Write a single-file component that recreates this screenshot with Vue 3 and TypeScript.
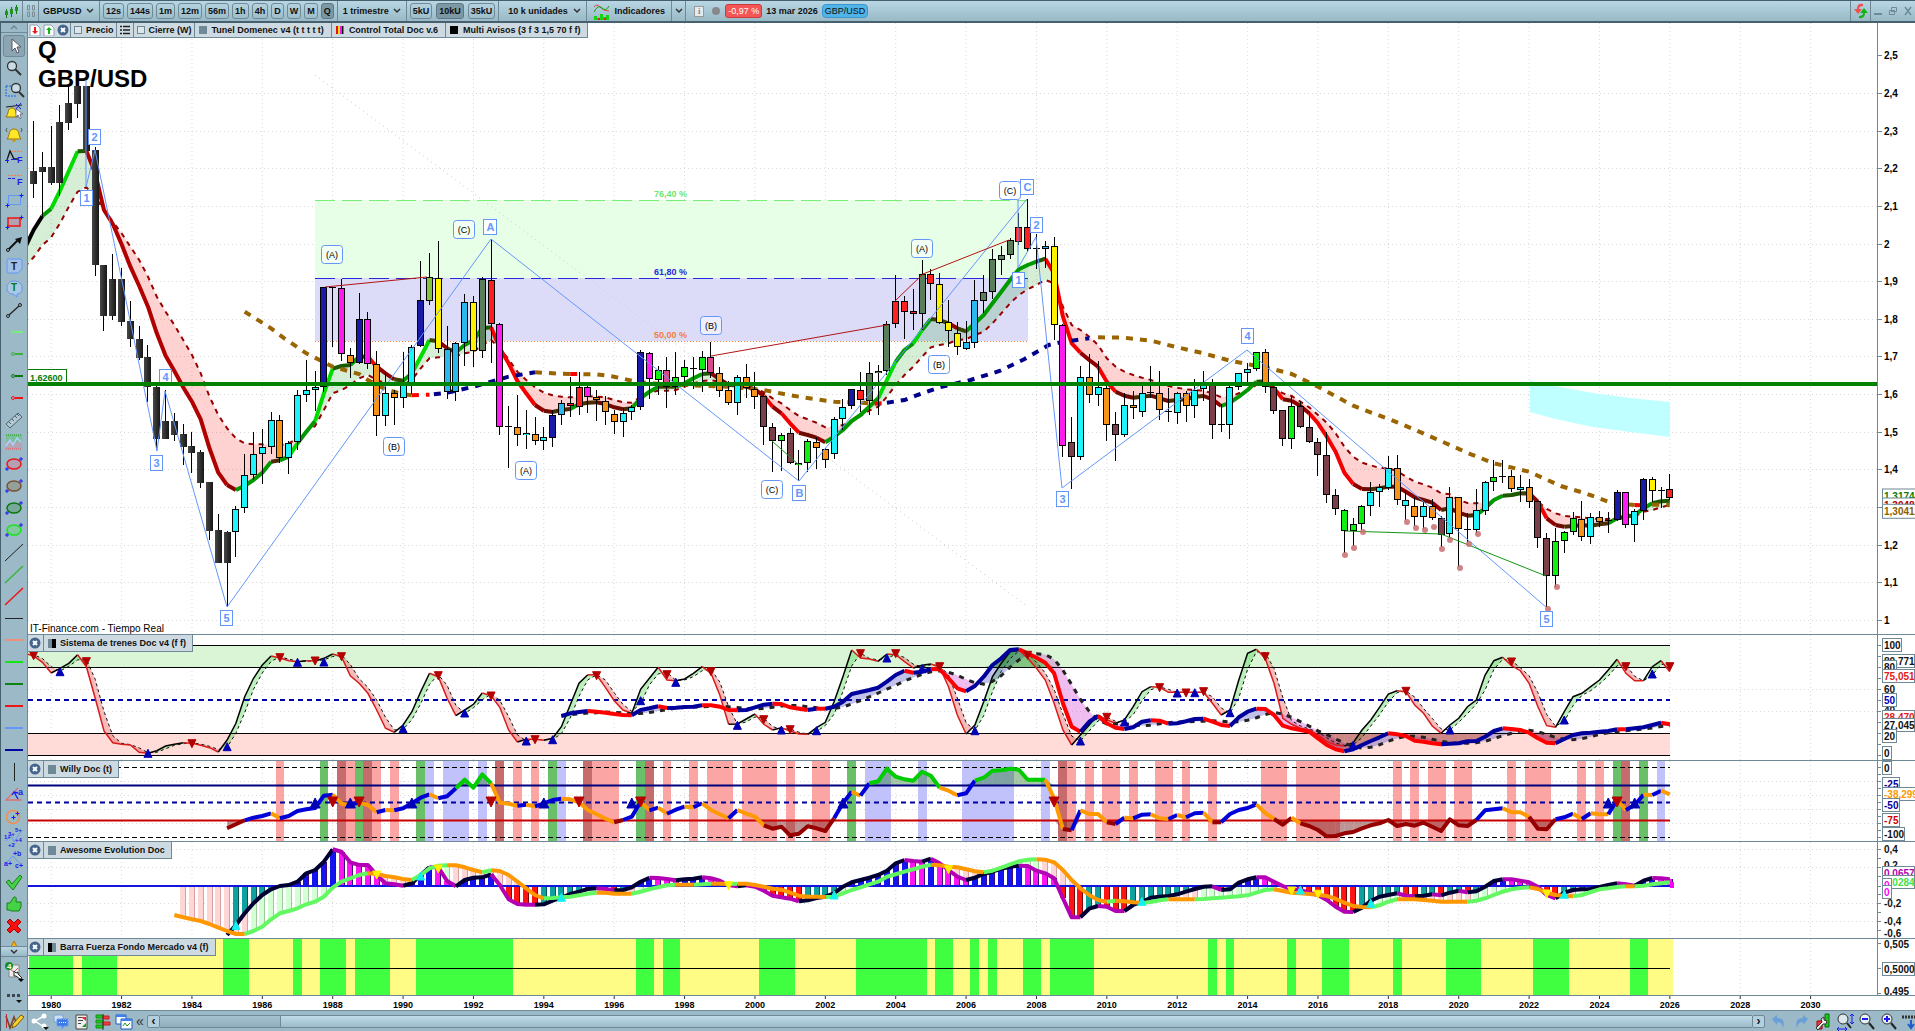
<script setup lang="ts">
type Run = { color: string; pts: string }
type Area = { color: string; pts: string }
type Tag = { t: string; v: number; c?: string; box?: boolean }

const STEP = 8.797
const X = (k: number) => 23.2 + STEP * k
// vertical data is stored in thirds of a pixel, from a base that each pane sets
const mk = (base: number) => (v: number) => Math.round(((v - base) / 3) * 10) / 10
const yMain = mk(69)
const yTrend = mk(15)
const yWilly = mk(393)
const yAwe = mk(636)
const yForce = mk(927)
const nums = (s: string) => s.trim().split(/\s+/).map(Number)

const years = Array.from({ length: 26 }, (_, i) => 1980 + i * 2)
const prices = Array.from({ length: 16 }, (_, i) => (25 - i) / 10)
const priceY = (p: number) => Math.round(597 - (p - 1) * 376.5) + 0.5
const priceText = (p: number) => String(p).replace('.', ',')

function runs(vals: number[], start: number, y: (v: number) => number, color: (i: number) => string): Run[] {
  const out: Run[] = []
  for (let i = 1; i < vals.length; i++) {
    const c = color(i)
    const p = `${X(start + i).toFixed(1)},${y(vals[i])}`
    const last = out[out.length - 1]
    if (last && last.color === c) last.pts += ' ' + p
    else out.push({ color: c, pts: `${X(start + i - 1).toFixed(1)},${y(vals[i - 1])} ${p}` })
  }
  return out
}
function between(a: number[], b: number[], start: number, y: (v: number) => number, up: string, down: string): Area[] {
  const out: Area[] = []
  const emit = (color: string, x1: number, a1: number, b1: number, x2: number, a2: number, b2: number) => {
    if (color) out.push({ color, pts: `${x1.toFixed(1)},${y(a1)} ${x2.toFixed(1)},${y(a2)} ${x2.toFixed(1)},${y(b2)} ${x1.toFixed(1)},${y(b1)}` })
  }
  for (let i = 1; i < a.length; i++) {
    const d1 = b[i - 1] - a[i - 1]
    const d2 = b[i] - a[i]
    const x1 = X(start + i - 1)
    const x2 = X(start + i)
    if (d1 * d2 < 0) {
      const f = d1 / (d1 - d2)
      const xm = x1 + (x2 - x1) * f
      const m = a[i - 1] + (a[i] - a[i - 1]) * f
      emit(d1 > 0 ? up : down, x1, a[i - 1], b[i - 1], xm, m, m)
      emit(d2 > 0 ? up : down, xm, m, m, x2, a[i], b[i])
    } else if (d1 + d2 !== 0) emit(d1 + d2 > 0 ? up : down, x1, a[i - 1], b[i - 1], x2, a[i], b[i])
  }
  return out
}
const line = (vals: number[], start: number, y: (v: number) => number) =>
  vals.map((v, i) => `${X(start + i).toFixed(1)},${y(v)}`).join(' ')

/* price candles: high, body top, body bottom, low, colour */
const candleColors: Record<string, string> = {
  K: 'url(#darkBody)', c: '#1ff4fb', o: '#f7931a', b: '#1a1aa8', m: '#ff1cf0', y: '#fff200', s: '#2cb8ec',
  g: '#5a7d5a', r: '#ff2020', l: '#10f010', w: '#7a3f48', p: '#d84a8c', v: '#84c440', d: '#000',
}
const candles = `
363 513 551 593 K|457 501 515 650 K|378 501 548 555 K|315 366 548 587 K|258 309 368 389 K|258 258 311 354 K|258 258 453 453 K|442 450 794 827 K|794 794 947 992 K|763 838 947 960 K
804 838 965 977 K|903 963 1018 1040 K|978 1017 1073 1080 K|1036 1071 1160 1205 K|1158 1160 1316 1350 K|1170 1263 1316 1316 K|1240 1263 1304 1322 K|1272 1302 1340 1394 K|1296 1338 1358 1418 K|1350 1356 1448 1463 K
1446 1446 1592 1620 K|1543 1590 1688 1688 K|1593 1596 1688 1820 K|1518 1526 1597 1670 c|1362 1426 1525 1540 c|1296 1363 1426 1440 c|1287 1342 1362 1453 c|1236 1261 1341 1362 c|1245 1261 1375 1390 o|1323 1328 1375 1423 c
1170 1186 1327 1350 c|1080 1171 1186 1207 c|1113 1162 1171 1232 c|861 862 1162 1176 b|861 862 864 1040 d|838 865 1063 1082 m|1045 1064 1090 1133 o|880 958 1090 1092 b|937 958 1093 1108 m|1053 1093 1249 1308 o
1116 1180 1249 1278 c|1170 1180 1195 1275 o|1057 1155 1195 1223 c|1035 1040 1153 1182 c|783 901 1039 1042 b|760 832 902 914 v|723 833 1048 1060 y|978 1048 1176 1196 s|1026 1030 1176 1202 s|883 907 1030 1098 s
888 907 1054 1100 y|832 838 1054 1073 g|718 841 973 1090 r|968 973 1282 1304 m|1218 1279 1282 1404 d|1185 1280 1306 1338 o|1230 1300 1306 1346 c|1252 1301 1322 1335 o|1282 1312 1324 1350 c|1230 1246 1315 1340 b
1200 1208 1246 1274 s|1130 1208 1219 1252 r|1117 1160 1222 1245 r|1150 1160 1190 1240 m|1170 1192 1201 1262 o|1188 1202 1237 1275 o|1230 1243 1267 1302 o|1225 1238 1267 1310 c|1215 1222 1237 1260 c|1050 1057 1222 1230 b
1055 1058 1138 1198 m|1098 1110 1141 1185 l|1070 1110 1160 1223 p|1055 1130 1162 1185 l|1080 1100 1130 1160 l|1072 1103 1106 1168 d|1052 1072 1110 1175 l|1027 1070 1120 1134 p|1100 1120 1172 1190 o|1144 1171 1208 1215 o
1126 1130 1208 1244 c|1093 1130 1163 1195 o|1117 1168 1190 1227 o|1180 1187 1280 1335 w|1270 1280 1324 1415 w|1298 1304 1324 1412 l|1284 1300 1390 1392 w|1350 1388 1396 1444 l|1318 1324 1390 1417 l|1310 1327 1345 1407 o
1345 1346 1381 1404 o|1252 1258 1363 1377 c|1198 1220 1258 1290 c|1167 1168 1217 1228 b|1116 1171 1201 1236 r|1086 1120 1202 1244 g|1094 1113 1120 1245 g|963 973 1114 1124 g|825 904 973 983 r|888 904 935 1017 r
867 934 943 990 r|780 823 943 990 g|808 823 853 900 r|820 853 968 972 y|900 967 994 1040 y|965 998 1042 1064 y|962 1027 1046 1050 s|840 901 1028 1043 s|826 875 902 938 g|748 778 875 897 g
738 766 779 825 g|713 721 766 776 g|640 680 725 735 r|598 680 748 757 r|703 745 748 807 d|723 739 748 803 s|712 739 976 1020 y|972 976 1337 1372 m|1251 1327 1370 1468 w|1098 1130 1370 1380 c
1062 1130 1184 1210 o|1083 1162 1184 1218 c|1158 1165 1274 1324 o|1236 1273 1304 1383 w|1180 1216 1304 1310 c|1172 1216 1225 1257 o|1147 1180 1236 1250 c|1098 1176 1180 1193 d|1112 1178 1229 1260 o|1163 1233 1235 1266 d
1175 1180 1238 1272 c|1173 1180 1218 1266 o|1138 1169 1217 1254 c|1112 1153 1168 1204 c|1138 1155 1274 1318 w|1212 1273 1276 1296 d|1154 1162 1275 1317 c|1118 1120 1162 1170 c|1090 1108 1118 1154 c|1056 1057 1108 1112 l
1047 1057 1160 1180 o|1150 1160 1232 1242 w|1230 1230 1316 1338 w|1188 1219 1316 1346 l|1203 1219 1282 1284 w|1235 1282 1325 1328 w|1314 1325 1366 1427 w|1295 1366 1486 1508 w|1468 1486 1526 1544 w|1528 1530 1594 1660 l
1555 1573 1594 1637 l|1515 1518 1573 1590 l|1446 1477 1519 1548 c|1453 1462 1477 1520 c|1368 1405 1465 1470 c|1365 1405 1499 1516 o|1470 1501 1519 1560 c|1490 1519 1550 1578 o|1505 1519 1550 1588 c|1498 1519 1555 1560 o
1548 1555 1604 1640 w|1462 1492 1603 1612 c|1490 1492 1588 1702 o|1540 1588 1591 1628 d|1467 1531 1591 1600 c|1443 1447 1532 1545 c|1381 1432 1447 1474 l|1381 1429 1432 1450 d|1409 1429 1468 1477 o|1425 1462 1469 1505 c
1437 1462 1505 1523 o|1503 1504 1615 1643 w|1600 1615 1729 1822 w|1584 1624 1729 1762 l|1594 1597 1624 1658 l|1537 1555 1597 1605 l|1503 1557 1612 1622 o|1540 1552 1612 1632 c|1534 1552 1565 1580 o|1536 1561 1564 1600 d
1470 1477 1561 1563 b|1476 1477 1576 1584 m|1528 1532 1576 1625 c|1434 1438 1532 1560 b|1431 1438 1472 1506 y|1462 1469 1471 1523 d|1422 1468 1495 1500 r`
  .trim().split(/[|\n]/).map((row, i) => {
    const f = row.trim().split(' ')
    const [h, t, b, l] = f.slice(0, 4).map(Number)
    const top = Math.round(yMain(t))
    const dark = f[4] === 'K' || f[4] === 'd'
    return {
      x: Math.floor(X(i - 2)), y1: Math.round(yMain(h)), y2: Math.round(yMain(l)), top,
      h: Math.max(1, Math.round(yMain(b)) - top), fill: candleColors[f[4]], dark,
    }
  })

/* tunnel averages */
const fast = nums(`745 690 648 626 572 513 454 453 520 630 672 733 800 858 920 1000 1067 1113 1162 1205 1258 1345 1418 1455 1470 1457 1440 1418 1385 1381 1370 1330 1295 1263 1180 1106 1098 1095 1070 1070 1100 1120 1138 1142 1120 1070 1020 1024 1045 1057 1035 1020 985 982 1045 1090 1143 1180 1215 1232 1236 1230 1227 1213 1208 1207 1212 1222 1228 1225 1195 1175 1160 1160 1160 1150 1135 1122 1120 1138 1155 1156 1160 1168 1188 1220 1240 1270 1298 1305 1313 1327 1310 1290 1263 1245 1220 1195 1140 1085 1050 1030 990 957 960 970 985 994 970 945 910 875 840 808 795 785 776 820 950 1030 1058 1080 1100 1145 1175 1187 1193 1190 1187 1195 1203 1200 1198 1190 1188 1198 1218 1208 1190 1170 1145 1144 1165 1198 1202 1218 1240 1270 1310 1355 1418 1452 1467 1468 1465 1460 1460 1475 1492 1500 1508 1530 1525 1538 1547 1545 1525 1500 1487 1485 1480 1480 1505 1555 1575 1580 1578 1576 1577 1573 1570 1555 1550 1545 1525 1510 1504 1502`)
const slow = nums(`800 772 735 712 670 620 575 562 590 630 665 700 740 780 830 890 935 975 1020 1065 1120 1190 1245 1285 1315 1330 1333 1333 1335 1336 1330 1315 1295 1278 1230 1180 1170 1155 1135 1125 1140 1150 1155 1155 1140 1105 1075 1072 1070 1068 1060 1055 1035 1020 1045 1078 1115 1140 1162 1178 1186 1190 1192 1192 1188 1190 1192 1200 1207 1208 1190 1178 1172 1172 1170 1160 1150 1143 1141 1145 1155 1158 1158 1165 1177 1195 1210 1230 1248 1258 1268 1282 1282 1275 1265 1248 1232 1220 1190 1155 1125 1100 1070 1042 1035 1030 1020 1018 1005 995 970 940 910 885 868 855 840 850 920 975 990 1010 1035 1075 1100 1115 1125 1133 1140 1150 1158 1163 1168 1170 1172 1180 1192 1190 1180 1170 1155 1150 1165 1180 1188 1205 1222 1245 1268 1300 1340 1370 1388 1396 1404 1405 1413 1430 1445 1453 1463 1480 1483 1500 1509 1510 1507 1500 1488 1487 1483 1483 1505 1527 1540 1548 1550 1552 1556 1557 1557 1550 1550 1550 1535 1530 1522 1515`)
const tunnelFill = between(fast, slow, -3, yMain, 'rgba(0,150,0,.16)', 'rgba(255,50,50,.22)')
const fastRuns = runs(fast, -3, yMain, (i) => {
  const d = fast[i] - fast[i - 1]
  if (i < 3) return '#000'
  if (d < -38) return '#00dc00'
  if (d < -9) return '#009a00'
  if (d < 0) return fast[i] < slow[i] ? '#1c5a00' : '#4a2c00'
  if (d < 14) return fast[i] < slow[i] ? '#3c4400' : '#6e0a00'
  if (d < 28) return '#8e0000'
  return i < 26 ? '#b00000' : '#f40000'
})
const longMa: Run[] = ([
  ['#9a6500', [22, 935, 25, 985, 26.5, 1015, 29, 1060, 32, 1100, 35, 1122, 36, 1140, 38, 1168, 40, 1183, 41, 1186]],
  ['#ff0000', [41, 1186, 43, 1184]],
  ['#00008b', [43.5, 1183, 45, 1178, 48, 1160, 50, 1145, 52, 1130, 55, 1117]],
  ['#9a6500', [55, 1117, 57, 1120, 59, 1122]],
  ['#ff0000', [59, 1122, 60, 1122]],
  ['#9a6500', [60.5, 1123, 62, 1123, 64, 1130, 66, 1142, 68, 1150, 72, 1155, 77, 1160, 81, 1170, 84, 1186, 87, 1198, 89, 1205, 92, 1208, 93.6, 1211]],
  ['#ff0000', [93.6, 1211, 95, 1208]],
  ['#00008b', [95, 1208, 97, 1200, 98.5, 1185, 101, 1162, 104.5, 1140, 107.8, 1113, 110.6, 1078, 113.4, 1035, 115, 1025, 116.6, 1020, 118, 1015]],
  ['#9a6500', [119, 1012, 122, 1013, 125, 1022, 128, 1042, 131, 1060, 134, 1082, 136.5, 1095, 139, 1108, 141, 1122, 144, 1160, 148, 1217, 153, 1267, 157, 1312, 161.4, 1363, 164, 1390, 168, 1415, 171.6, 1458, 174.4, 1480, 177, 1505, 178.6, 1513, 180, 1515]],
  ['#ff0000', [180, 1515, 181.6, 1516]],
  ['#9a6500', [182, 1514, 184, 1515]],
] as [string, number[]][]).map(([color, p]) => ({
  color,
  pts: p.reduce((s, v, i) => s + (i % 2 ? yMain(v) + ' ' : X(v).toFixed(1) + ','), ''),
}))

/* wave labels, in window pixels */
const waves: [string, number, number][] = [
  ['2', 94, 137], ['1', 86, 198], ['4', 165, 377], ['3', 156, 463], ['5', 226, 618], ['A', 490, 227], ['C', 1027, 187],
  ['2', 1036, 225], ['1', 1018, 280], ['B', 799, 493], ['3', 1062, 499], ['4', 1247, 336], ['5', 1546, 619],
]
const subWaves: [string, number, number][] = [
  ['(A)', 332, 254], ['(C)', 464, 229], ['(B)', 394, 446], ['(A)', 526, 470], ['(B)', 711, 325], ['(C)', 772, 489],
  ['(B)', 939, 364], ['(A)', 922, 248], ['(C)', 1010, 190],
]
const dots = [[1345, 555], [1354, 548], [1363, 532], [1407, 522], [1416, 528], [1425, 530], [1434, 527], [1442, 549], [1450, 540], [1460, 568], [1469, 544], [1478, 534], [1548, 609], [1557, 587]]

/* Sistema de trenes */
const train = nums(`70 78 97 129 115 100 74 110 205 303 338 343 345 367 370 362 348 343 338 340 346 353 366 330 280 200 145 105 78 84 92 95 92 93 85 72 80 137 160 190 240 295 307 285 245 185 130 140 205 257 240 223 189 197 232 300 336 328 328 331 325 290 225 160 134 135 172 212 240 250 178 145 112 150 152 147 130 110 130 195 283 282 267 252 283 300 293 303 312 313 293 277 215 140 60 84 87 94 72 74 95 114 106 102 112 170 255 312 285 215 140 100 65 60 85 115 150 220 300 345 315 285 255 270 280 270 230 185 170 172 187 187 187 187 187 220 255 240 150 70 58 85 160 265 283 295 300 315 335 345 348 338 300 270 232 192 182 185 225 250 288 310 285 265 230 210 135 92 82 107 122 160 230 287 292 245 200 190 170 150 120 88 130 152 152 110 92 125`)
const trainSig = train.map((v, i) => (v + train[Math.max(0, i - 1)]) / 2 + (i > 1 ? (train[i - 1] - v) * 0.1 : 0))
const trainRuns = runs(train, -3, yTrend, (i) => (train[i] < train[i - 1] ? '#000' : '#d81c1c'))
const trainFill = between(train, trainSig, -3, yTrend, 'rgba(60,210,60,.35)', 'rgba(230,60,60,.35)')
const base = nums(`258 250 246 243 245 248 252 255 256 240 235 229 234 233 231 230 226 226 230 240 241 240 232 224 221 222 232 236 240 236 236 230 215 192 186 180 173 155 135 122 128 125 117 118 145 175 184 168 140 105 85 60 58 70 83 98 130 220 290 305 275 258 280 293 297 292 275 271 272 281 280 274 267 266 275 285 288 262 245 236 237 255 287 295 300 305 325 345 358 364 358 345 333 322 310 313 318 332 335 340 343 341 340 334 333 320 303 295 297 300 308 325 338 340 327 315 310 308 305 303 298 298 295 292 285 278 283`)
const baseSig = base.map((_, i) => {
  const w = base.slice(Math.max(0, i - 4), i + 1)
  return w.reduce((a, b) => a + b, 0) / w.length
})
const baseRuns = runs(base, 58, yTrend, (i) => (base[i] < base[i - 1] ? '#00009c' : '#ff0000'))
const baseFill = between(base, baseSig, 58, yTrend, 'rgba(50,50,190,.3)', 'rgba(215,90,215,.4)')
const lowFill = between(base.map((v) => Math.max(v, 310)), base.map(() => 310), 58, yTrend, '', 'rgba(130,10,10,.4)')
const highFill = between(base.map((v) => Math.min(v, 112)), base.map(() => 112), 58, yTrend, 'rgba(0,120,0,.4)', '')
const trainDown = [[-2, 77], [4, 95], [16, 341], [26, 83], [30, 93], [33, 80], [44, 137], [50, 198], [55, 329], [62, 137], [70, 134], [75, 125], [81, 269], [84, 299], [92, 71], [96, 71], [101, 110], [111, 76], [120, 262], [126, 173], [129, 189], [131, 185], [138, 80], [154, 184], [166, 96], [179, 110], [184, 110]]
const trainUp = [[1, 125], [11, 370], [20, 350], [28, 97], [31, 96], [40, 296], [47, 249], [54, 333], [57, 329], [67, 212], [71, 157], [78, 286], [83, 300], [87, 302], [95, 84], [99, 116], [105, 302], [117, 333], [122, 276], [128, 189], [130, 188], [134, 248], [148, 346], [159, 300], [172, 270], [182, 132]]

/* Willy */
const willy = nums(`595 583 571 563 558 550 565 558 543 538 534 497 494 521 525 517 525 547 540 541 535 520 503 493 505 499 475 449 473 433 460 518 521 527 524 529 520 510 506 508 517 540 553 566 577 570 560 515 541 533 551 539 530 532 520 540 553 565 540 551 560 586 596 590 616 611 589 595 603 565 520 485 497 460 454 416 440 448 452 425 437 473 482 496 490 452 443 422 421 416 419 449 449 449 505 597 601 541 552 552 577 582 563 565 554 553 565 567 555 562 550 548 577 577 552 540 534 523 549 567 584 563 580 588 600 619 618 610 606 595 586 580 570 588 582 587 578 590 603 568 586 588 570 541 538 535 547 547 560 596 598 568 562 551 567 550 553 553 510 540 525 494 495 482 493`)
const willyRuns = runs(willy, 20, yWilly, (i) => {
  const a = willy[i - 1]
  const b = willy[i]
  if ((a + b) / 2 < 466) return '#00cc00'
  if ((a + b) / 2 > 573) return '#960000'
  return b < a ? '#0000d8' : '#ff9a00'
})
const willyHigh = between(willy.map((v) => Math.min(v, 466)), willy.map(() => 466), 20, yWilly, 'rgba(20,110,20,.38)', '')
const willyLow = between(willy.map((v) => Math.max(v, 571)), willy.map(() => 571), 20, yWilly, '', 'rgba(110,20,20,.45)')
const bandColor: Record<string, string> = { p: '#fca5a5', g: '#69c069', r: '#c66c6c', l: '#c1c1fb' }
const bands = 'p26 g31 r33 p34 g35 r36 p37 p39 g42 l43 l45-47 l49 r51 p53 p55 g57 l58 r61 p62-64 g67 r68 p70 p73 p75-77 p79-82 p84 p87-88 g91 l93-95 l99 l104-109 l113 r115 p116 p118 p120-121 p123 p126-127 p129 p132 p138-140 p142-146 p153 p155 p157-158 p160-161 p166 p168-170 p174 p176 g178 r179 g181 l183'
  .split(' ').map((s) => {
    const [a, b] = s.slice(1).split('-').map(Number)
    return { x: Math.round(X(a - 0.5)), w: Math.round(X((b ?? a) + 0.5)) - Math.round(X(a - 0.5)), c: bandColor[s[0]] }
  })
const willyUp = [30, 34, 41, 56, 66, 90, 177, 180]
const willyDown = [32, 35, 50, 60, 67, 114, 178]

/* Awesome Evolution */
const ao = nums(`915 885 850 820 795 778 768 765 755 730 720 695 658 665 697 705 705 735 760 763 767 760 735 712 712 753 769 750 743 742 733 765 808 822 824 824 823 812 803 792 785 777 775 777 781 780 772 755 743 744 747 751 748 746 742 745 752 765 769 766 770 782 797 802 806 814 811 804 800 790 770 757 750 743 735 722 700 690 693 695 686 700 720 740 750 743 732 725 716 710 707 708 722 730 745 805 862 862 836 828 830 843 843 825 815 803 800 798 793 785 777 770 769 780 778 758 748 742 742 755 768 778 780 788 795 810 830 845 846 833 812 800 795 790 797 799 797 793 796 788 782 787 784 770 753 748 748 752 757 770 795 805 788 780 778 777 771 765 760 763 767 752 744 745 748`)
const aoSlow = nums(`855 862 868 873 882 893 903 912 912 903 890 868 850 843 835 823 815 800 773 755 745 735 730 732 738 742 747 750 735 715 707 706 706 712 720 727 721 723 735 755 775 795 805 804 802 800 796 791 788 788 791 791 791 785 778 772 766 764 764 764 763 761 761 762 761 761 765 770 776 779 788 797 800 800 801 800 790 780 772 763 755 740 733 725 718 710 704 706 710 712 718 724 727 722 713 703 694 689 688 689 697 720 750 775 795 810 815 812 814 817 819 816 811 808 808 808 808 807 805 803 801 799 796 788 780 778 783 788 790 792 794 798 806 818 828 831 832 826 815 808 808 808 810 812 815 815 815 815 812 805 795 785 778 774 772 777 788 795 798 799 795 786 778 775 771 769 769 767 763 760 757`)
const aoRuns = runs(ao, 20, yAwe, (i) => (ao[i] < ao[i - 1] ? '#000033' : '#b400b4'))
const aoSlowRuns = runs(aoSlow, 14, yAwe, (i) => (aoSlow[i] < aoSlow[i - 1] ? '#62f862' : '#ff9800'))
const bar = (k: number, v: number, fill: string, edge: string) => ({
  x: Math.round(X(k)) - 3, y: Math.min(yAwe(767), yAwe(v)), h: Math.abs(yAwe(v) - yAwe(767)), fill, edge,
})
const aoBars = [
  ...aoSlow.slice(1).map((v, i) => (v < aoSlow[i] ? bar(i + 15, v, '#d4ffd4', '#a0c8a0') : bar(i + 15, v, '#ffd6d6', '#d8a0a0'))),
  ...ao.slice(1).map((v, i) => {
    const rising = v < ao[i]
    const fill = v < 767 ? (rising ? '#1414f0' : '#ff14f4') : rising ? '#0fa0a0' : '#ff1414'
    return bar(i + 21, v, fill, v < 767 ? '#3c0a78' : rising ? '#055' : '#700')
  }),
]
const aoUp = [[21, 886], [42, 738], [58, 802], [89, 795], [124, 814], [142, 780], [150, 820], [172, 793]]
const aoDown = [[37, 735], [44, 717], [77, 767], [102, 719], [141, 783], [144, 793], [170, 792]]

/* Barra Fuerza Fondo */
const force = [[-2, 2], [4, 7], [20, 22], [28, 28], [31, 33], [35, 38], [42, 52], [67, 68], [70, 71], [81, 84], [92, 99], [101, 102], [105, 105], [107, 107], [111, 112], [114, 118], [132, 132], [134, 134], [141, 141], [145, 147], [153, 153], [159, 162], [169, 172], [180, 181]]
  .map(([a, b]) => ({ x: Math.round(X(a - 0.5)), w: Math.round(X(b + 0.5)) - Math.round(X(a - 0.5)) }))
const endX = Math.round(X(184))

const tri = (x: number, y: number, r: number, up: boolean) =>
  up ? `${x - r},${y + r} ${x + r},${y + r} ${x},${y - r}` : `${x - r},${y - r} ${x + r},${y - r} ${x},${y + r}`

/* axis tags */
const tagWidth = (t: string) => [...t].reduce((a, c) => a + (c === ',' || c === '-' ? 3 : 5), 0) + 4
const priceTags: Tag[] = [
  { t: '1,31744', v: 1488, c: '#087a08', box: true }, { t: '1,30484', v: 1515, c: '#b00000', box: true }, { t: '1,30412', v: 1534, c: '#8a6000', box: true },
]
const trendTags: Tag[] = [
  { t: '100', v: 46, box: true }, { t: '80,771', v: 92, box: true }, { t: '80', v: 112, box: true }, { t: '75,051', v: 139, c: '#e02020', box: true },
  { t: '60', v: 178 }, { t: '40', v: 240 }, { t: '50', v: 211, c: '#0000b4', box: true }, { t: '28,470', v: 262, c: '#e02020', box: true },
  { t: '27,045', v: 286, box: true }, { t: '20', v: 318, box: true }, { t: '0', v: 370, box: true },
]
const willyTags: Tag[] = [
  { t: '0', v: 413, box: true }, { t: '-25', v: 461, c: '#0000a0', box: true }, { t: '-38,299', v: 493, c: '#ff9800', box: true },
  { t: '-50', v: 524, c: '#0000a0', box: true }, { t: '-75', v: 571, c: '#d00000', box: true }, { t: '-100', v: 613, box: true },
]
const aweTags: Tag[] = [
  { t: '0,4', v: 656 }, { t: '0,2', v: 706 }, { t: '0,0657', v: 728, c: '#b400b4', box: true }, { t: '0,0284', v: 757, c: '#46e046', box: true },
  { t: '0', v: 766, c: '#ff00ff', box: true }, { t: '0', v: 785, c: '#ff00ff', box: true }, { t: '-0,2', v: 819 }, { t: '-0,4', v: 873 }, { t: '-0,6', v: 908 },
]
const forceTags: Tag[] = [{ t: '0,505', v: 941 }, { t: '0,5000', v: 1016, box: true }, { t: '0,495', v: 1082 }]
const axes = [
  { tags: trendTags, y: yTrend }, { tags: willyTags, y: yWilly }, { tags: aweTags, y: yAwe }, { tags: forceTags, y: yForce },
]
const ticks = [
  [46, 79, 112, 145, 178, 211, 244, 277, 310, 343, 376], [412, 433, 454, 475, 496, 517, 538, 559, 580, 601, 622],
  [658, 685, 712, 739, 767, 793, 820, 847, 874, 901], [940, 1015, 1090],
]

/* toolbar */
const frames = ['12s', '144s', '1m', '12m', '56m', '1h', '4h', 'D', 'W', 'M', 'Q']
const unitSizes = ['5kU', '10kU', '35kU']

const plus = (x: number, y: number) => `<path d="M${x - 2} ${y}h4M${x} ${y - 2}v4" stroke="#1a1af0" fill="none"/>`
const pin = (c: string) => `<circle cx="10" cy="11" r="1.5" fill="none" stroke="${c}"/><path d="M12 11h8" stroke="${c}" stroke-width="2"/>`
const oval = (c: string, f: string) => `<ellipse cx="11" cy="11" rx="7" ry="5" fill="${f}" stroke="${c}" stroke-width="1.5"/>${plus(4, 16)}${plus(18, 6)}`
const diag = (c: string, w: number) => `<path d="M2 20L20 3" stroke="${c}" stroke-width="${w}"/>`
const flat = (c: string, w: number) => `<path d="M2 ${w === 1 ? 11.5 : 11}h18" stroke="${c}" stroke-width="${w}"/>`
const bell = '<path d="M4 16c3-3 1-10 7-10s4 7 7 10z" fill="#ffe628" stroke="#9a7400"/><circle cx="11" cy="17.500" r="1.500" fill="#c89600"/>'
const tools: { name: string; svg: string }[] = [
  { name: 'Cursor', svg: '<path d="M9 4v12l3-3 2 5 2-1-2-5h4z" fill="#fff" stroke="#556"/>' },
  { name: 'Zoom', svg: '<circle cx="9" cy="9" r="4.500" fill="#c8dce6" stroke="#333" stroke-width="1.300"/><path d="M12 12l6 6" stroke="#333" stroke-width="2"/>' },
  { name: 'Zoom de zona', svg: '<path d="M3 7h5M3 7v10h11" stroke="#1464e6" stroke-dasharray="2 1" fill="none"/><circle cx="13" cy="9" r="4.500" fill="#c8dce6" stroke="#333" stroke-width="1.300"/><path d="M16 13l5 5" stroke="#333" stroke-width="2"/>' },
  { name: 'Alerta en objeto', svg: '<path d="M3 16c3-3 1-9 6-9s3 6 6 9z" fill="#ffe628" stroke="#9a7400"/><path d="M3 6l16-2" stroke="#222"/><path d="M13 3l5 5M18 2l-5 6" stroke="#1a1af0"/><path d="M13 8v8l2-2 2 4 1-1-1-4h3z" fill="#fff" stroke="#556" stroke-width=".700"/>' },
  { name: 'Alerta', svg: bell + '<path d="M4 5q-2 2 0 4M18 5q2 2 0 4" stroke="#555" fill="none"/>' },
  { name: 'Retroceso Fibonacci', svg: '<path d="M4 15l3-9 4 8h4" stroke="#111" fill="none" stroke-width="1.300"/><path d="M8 6.500h12" stroke="#f08050" stroke-dasharray="2 1"/><path d="M2 15.500h4M4.500 13v5M8 14.500h5" stroke="#1a1af0"/><text x="14" y="18" font-size="9" font-weight="700" fill="#1a1af0">F</text>' },
  { name: 'Extensión Fibonacci', svg: '<path d="M5 8.500h14" stroke="#f08050" stroke-dasharray="2 1"/><path d="M5 11.500h8" stroke="#1a1af0" stroke-dasharray="3 1"/><text x="14" y="18" font-size="9" font-weight="700" fill="#1a1af0">F</text>' },
  { name: 'Rectángulo azul', svg: '<path d="M5.500 6.500h12v9h-12z" fill="none" stroke="#6496fa"/>' + plus(4.5, 16.5) + plus(18.5, 6.5) },
  { name: 'Rectángulo rojo', svg: '<path d="M5 7h12v8H5z" fill="#b4a0b0" stroke="#f01414" stroke-width="1.500"/>' + plus(4.5, 16.5) + plus(18.5, 6.5) },
  { name: 'Flecha', svg: '<path d="M6 16l9-9" stroke="#111" stroke-width="2"/><path d="M19 4l-2 7-5-5z" fill="#111"/><circle cx="5" cy="17" r="1.500" fill="none" stroke="#111"/>' },
  { name: 'Texto', svg: '<path d="M5 4h12q2 0 2 2v8l-4 4H5q-1 0-1-2V6q0-2 1-2z" fill="#a0c0e6" stroke="#6496fa"/><text x="8" y="15" font-size="10" font-weight="700" fill="#222">T</text>' },
  { name: 'Comentario', svg: '<path d="M11 4c5 0 8 3 8 7s-2 6-5 6v3l-4-3c-4 0-6-3-6-6s2-7 7-7z" fill="#a8c8e6" stroke="#6496fa"/><text x="8" y="14" font-size="10" font-weight="700" fill="#0a7a0a">T</text>' },
  { name: 'Segmento', svg: '<path d="M6 16l10-9" stroke="#222" stroke-width="1.300"/><circle cx="5" cy="17" r="1.500" fill="none" stroke="#222"/><circle cx="17" cy="6" r="1.500" fill="none" stroke="#222"/>' },
  { name: 'Nivel verde claro', svg: pin('#78f078') }, { name: 'Nivel verde', svg: pin('#3cb43c') }, { name: 'Nivel verde oscuro', svg: pin('#0a780a') }, { name: 'Nivel rojo', svg: pin('#f01414') },
  { name: 'Regla', svg: '<path d="M3 15L15 4l4 4L7 19z" fill="#b4c8d2" stroke="#4b6270"/><path d="M6 13l2 2M9 10l2 2M12 7l2 2M14 5l2 2" stroke="#4b6270"/>' },
  { name: 'Detección de figuras', svg: '<path d="M3 4h16v7H3z" fill="#7cbf98"/><path d="M3 11h16v7H3z" fill="#b4a4b4"/><path d="M3 15l4-6 3 5 4-7 4 4" stroke="#aad4ff" fill="none" stroke-width="1.500"/><path d="M3 4h16" stroke="#0a9a0a" stroke-dasharray="1 1"/><path d="M3 18h16" stroke="#f05050" stroke-dasharray="1 1"/>' },
  { name: 'Elipse roja', svg: oval('#f01414', '#b4a0b0') }, { name: 'Elipse marrón', svg: oval('#7a5030', '#96a09a') }, { name: 'Elipse verde oscura', svg: oval('#0a780a', '#78a89a') }, { name: 'Elipse verde', svg: oval('#14e614', '#82c8a0') },
  { name: 'Recta negra', svg: diag('#222', 1) }, { name: 'Recta verde', svg: diag('#3cb43c', 1.5) }, { name: 'Recta roja', svg: diag('#f01414', 1.5) },
  { name: 'Horizontal negra', svg: flat('#222', 1) }, { name: 'Horizontal salmón', svg: flat('#f0907c', 2) }, { name: 'Horizontal verde claro', svg: flat('#14e614', 2) },
  { name: 'Horizontal verde', svg: flat('#0f820f', 2) }, { name: 'Horizontal roja', svg: flat('#f01414', 2) }, { name: 'Horizontal azul', svg: flat('#6496fa', 2) }, { name: 'Horizontal marino', svg: flat('#0505a0', 2) },
  { name: 'Vertical', svg: '<path d="M11.500 2v18" stroke="#222"/>' },
  { name: 'Ángulo', svg: '<path d="M15 5L3 17h16" stroke="#e07070" fill="none" stroke-width="1.300"/><path d="M11 9l4 7M9 12l2-3 4 1" stroke="#1a1af0" fill="none" stroke-width="1.300"/><text x="15" y="12" font-size="9" fill="#1a1af0">a</text>' },
  { name: 'Círculo', svg: '<circle cx="10" cy="12" r="6.500" fill="none" stroke="#f09050" stroke-width="1.500"/>' + plus(10.5, 12.5) + plus(14.5, 8.5) },
  { name: 'Ondas de impulso', svg: '<path d="M3 14l5-6 3 7 8-12" stroke="#6496fa" fill="none"/><g font-size="6" font-weight="700" fill="#1a1af0"><text x="1" y="12">1+</text><text x="5" y="20">+2</text><text x="5" y="9">3+</text><text x="12" y="15">+4</text><text x="12" y="5">5+</text></g>' },
  { name: 'Ondas de corrección', svg: '<path d="M4 13l6-6 8 9" stroke="#6496fa" fill="none"/><g font-size="7" font-weight="700" fill="#1a1af0"><text x="10" y="7">+b</text><text x="1" y="17">a+</text><text x="12" y="19">c+</text></g>' },
  { name: 'Visto bueno', svg: '<path d="M3 11l3-2 3 4 8-9 2 2-9 13z" fill="#46d246" stroke="#148214"/>' },
  { name: 'Pulgar arriba', svg: '<path d="M4 10h3l4-6q3-1 2 5h5q1 5-2 9H8l-1-1H4z" fill="#46d246" stroke="#148214"/>' },
  { name: 'Cruz', svg: '<path d="M4 7l3-3 4 4 4-4 3 3-4 4 4 4-3 3-4-4-4 4-3-3 4-4z" fill="#fa0f0f" stroke="#a00"/>' },
  { name: 'Aviso', svg: '<path d="M11 4l7 14H4z" fill="#ffb414" stroke="#b47800"/>' },
]
const leftIcons: { name: string; svg: string }[] = [
  { name: 'Compartir', svg: '<path d="M15 5L6 10l9 6" stroke="#fff" stroke-width="1.500" fill="none"/><circle cx="15" cy="5" r="2.500" fill="#fff"/><circle cx="5" cy="10" r="2.500" fill="#fff"/><circle cx="15" cy="15" r="2.500" fill="#fff"/><path d="M14 16h6l-3 3z" fill="#111"/>' },
  { name: 'Mensajes', svg: '<path d="M4 4h9v7H4z" fill="#cfe0f5" stroke="#7aa0d0"/><path d="M7 8h11v7h-4l-2 3v-3H7z" fill="#3c78e6" stroke="#6a9cf0"/><path d="M9 11.500h7" stroke="#fff" stroke-dasharray="1 1"/>' },
  { name: 'Informe', svg: '<path d="M5 4h11v14H5z" fill="#eee" stroke="#444"/><path d="M7 6.500h4M7 9.500h5M7 12.500h3" stroke="#444"/><path d="M10 6h5v4z" fill="#e03030"/><path d="M11 16l4-4v4z" fill="#14a014"/>' },
  { name: 'Libro de órdenes', svg: '<path d="M4 4h7v3H4zM4 9h7v3H4zM4 14h7v3H4z" fill="#19c819" stroke="#149014"/><path d="M11 5h6v3h-6zM11 11h7v3h-7z" fill="#f03c3c" stroke="#c02020"/><path d="M11 3v16" stroke="#333"/>' },
  { name: 'Ventanas', svg: '<path d="M3 4h10v9H3z" fill="#fff" stroke="#1e5ac8"/><path d="M3 4h10v2H3z" fill="#3c82f0"/><path d="M8 8h11v10H8z" fill="#fff" stroke="#1e5ac8"/><path d="M8 8h11v2H8z" fill="#3c82f0"/><path d="M10 15l2-3 2 3 3-3" stroke="#14a014" fill="none"/>' },
]
const rightIcons: { name: string; svg: string }[] = [
  { name: 'Deshacer', svg: '<path d="M4 8l5-4v3c6 0 8 4 6 10-1-5-3-6-6-6v3z" fill="#6aa0d8"/>' },
  { name: 'Rehacer', svg: '<path d="M18 8l-5-4v3c-6 0-8 4-6 10 1-5 3-6 6-6v3z" fill="#6aa0d8"/>' },
  { name: 'Ajustes de velas', svg: '<path d="M5 10v8h5v-8z" fill="#f03c3c" stroke="#900"/><path d="M13 3h4v13h-4z" fill="#19c819" stroke="#0a6e0a"/><path d="M4 17l6-6-1-3 3-2v3l3 1-1 3h-3l-5 6z" fill="#eee" stroke="#333"/>' },
  { name: 'Ajustar zoom', svg: '<circle cx="9" cy="8" r="5" fill="#dce8ee" stroke="#333"/><path d="M13 12l4 5" stroke="#222" stroke-width="2"/><path d="M18 3v10M16 5l2-2 2 2M16 11l2 2 2-2M3 18h10M5 16l-2 2 2 2M11 16l2 2-2 2" stroke="#1a1af0" fill="none"/>' },
  { name: 'Reducir', svg: '<circle cx="9" cy="8" r="5" fill="#e6f0f5" stroke="#333"/><path d="M6 8h6" stroke="#1a1af0" stroke-width="2"/><path d="M13 12l5 6" stroke="#222" stroke-width="2"/>' },
  { name: 'Ampliar', svg: '<circle cx="9" cy="8" r="5" fill="#e6f0f5" stroke="#333"/><path d="M6 8h6M9 5v6" stroke="#1a1af0" stroke-width="2"/><path d="M13 12l5 6" stroke="#222" stroke-width="2"/>' },
  { name: 'Ir al final', svg: '<path d="M2 6h20" stroke="#333" stroke-width="3" stroke-dasharray="2 1"/><path d="M11 9v7M8 13l3 4 3-4" stroke="#1e5ac8" fill="none" stroke-width="2"/>' },
]
const paneNames = [
  { id: 'trend', title: 'Sistema de trenes Doc v4 (f f)', sw: ['#6f8a96', '#000'] },
  { id: 'willy', title: 'Willy Doc (t)', sw: ['#6f8a96', '#6f8a96'] },
  { id: 'awe', title: 'Awesome Evolution Doc', sw: ['#6f8a96', '#6f8a96'] },
  { id: 'force', title: 'Barra Fuerza Fondo Mercado v4 (f)', sw: ['#000', '#6f8a96'] },
]
</script>

<template>
  <div class="app">
    <header class="topbar">
      <button class="cell logo" aria-label="Gráfico"><svg width="16" height="16"><path d="M3.500 6v9M8.500 4v10M13.500 2v9" stroke="#0a780a" /><path d="M2 8h3v4H2zM7 6h3v5H7zM12 4h3v4h-3z" fill="#1e961e" /></svg></button>
      <button class="cell link" aria-label="Vincular"><svg width="10" height="16"><path d="M1.500 7V2.500h2V7zM6.500 7V2.500h2V7zM1.500 9v4.500h2V9zM6.500 9v4.500h2V9z" fill="none" stroke="#7d8c94" /></svg></button>
      <label class="cell pick w-sym"><select aria-label="Valor"><option>GBPUSD</option></select><svg class="chev" width="8" height="6"><path d="M1 1l3 3 3-3" /></svg></label>
      <div class="cell group">
        <button v-for="f in frames" :key="f" class="tf" :class="{ on: f === 'Q' }">{{ f }}</button>
      </div>
      <label class="cell pick w-per"><select aria-label="Periodo"><option>1 trimestre</option></select><svg class="chev" width="8" height="6"><path d="M1 1l3 3 3-3" /></svg></label>
      <div class="cell group units">
        <button v-for="u in unitSizes" :key="u" class="tf" :class="{ on: u === '10kU' }">{{ u }}</button>
      </div>
      <label class="cell pick w-unit"><select aria-label="Unidades"><option>10 k unidades</option></select><svg class="chev" width="8" height="6"><path d="M1 1l3 3 3-3" /></svg></label>
      <button class="cell ind"><svg width="17" height="17"><path d="M1 4q3-4 6 0t9 4" fill="none" stroke="#f03c3c" /><path d="M1 9q4-8 8-4t7-2" fill="none" stroke="#14a014" /><path d="M1 17v-4h3v2h3v-4h3v3h3v-2h3v5z" fill="#14d214" /><path d="M5 17v-2h2v2zM11 17v-2h2v2z" fill="#e02020" /></svg>Indicadores</button>
      <button class="cell drop" aria-label="Más indicadores"><svg class="chev" width="8" height="6"><path d="M1 1l3 3 3-3" /></svg></button>
      <div class="status">
        <span class="info">i</span><span class="dot"></span><span class="chg">-0,97 %</span><span class="date">13 mar 2026</span><span class="pair">GBP/USD</span>
      </div>
      <button class="cell sync" aria-label="Sincronizar"><svg width="16" height="16"><path d="M10 1Q4 0 4 6H1l4 5 4-5H6q0-3 4-3z" fill="#f05050" /><path d="M6 15q6 1 6-5h3l-4-5-4 5h3q0 3-4 3z" fill="#14b414" /></svg></button>
      <div class="win">
        <button aria-label="Minimizar"><svg width="10" height="10"><path d="M1 8h8" stroke-width="2" /></svg></button>
        <button aria-label="Restaurar"><svg width="10" height="10"><path d="M3.500 1.500h5v4h-5zM1.500 4.500h5v4h-5z" /></svg></button>
        <button aria-label="Cerrar"><svg width="10" height="10"><path d="M2 1l6 8M8 1L2 9" stroke-width="1.500" /></svg></button>
      </div>
    </header>

    <div class="body">
      <aside class="side">
        <button class="fold" aria-label="Subir"><svg width="8" height="5"><path d="M1 4l3-3 3 3" fill="none" stroke="#6f8a96" stroke-width="1.500" /></svg></button>
        <div class="tools">
          <button v-for="(t, i) in tools" :key="t.name" :aria-label="t.name" :class="{ active: i === 0 }"><svg width="22" height="22" v-html="t.svg"></svg></button>
        </div>
        <button class="more" aria-label="Bajar"><svg class="chev" width="8" height="6"><path d="M1 1l3 3 3-3" /></svg></button>
        <button class="gear" aria-label="Configurar"><svg width="22" height="22"><path d="M6 5h10v12H6z" fill="#eee" stroke="#888" /><path d="M7 9l4 3 4-4" stroke="#e05050" fill="none" /><circle cx="6" cy="6" r="4" fill="#148c28" /><text x="4" y="9" font-size="8" font-weight="700" fill="#fff">4</text><path d="M11 11l2 2 2-1v2l4 4-2 1-4-3h-2z" fill="#fff" stroke="#222" /><path d="M15 19h6l-3 3z" fill="#000" /></svg></button>
        <button class="dotsbtn" aria-label="Opciones"><svg width="22" height="18"><path d="M4 6h3v3H4zM9 6h3v3H9zM14 6h3v3h-3z" fill="#3c4650" /><path d="M13 12h6l-3 3z" fill="#111" /></svg></button>
      </aside>

      <main class="charts">
        <section class="pane main">
          <div class="plot">
            <svg class="cv" width="100%" height="100%">
              <defs>
                <linearGradient id="darkBody"><stop offset="0" stop-color="#484848" /><stop offset="1" stop-color="#161616" /></linearGradient>
              </defs>
              <g class="grid">
                <line v-for="y in years" :key="y" :x1="X((y - 1980) * 4)" :x2="X((y - 1980) * 4)" y1="0" y2="100%" />
                <line v-for="p in prices.slice(1)" :key="p" x1="0" x2="100%" :y1="priceY(p)" :y2="priceY(p)" />
              </g>
              <g transform="translate(-28 -23)">
                <rect x="315" y="200" width="713" height="78" fill="#e7ffe7" />
                <rect x="315" y="278" width="713" height="63" fill="#dddcf8" />
                <path d="M315 75L1028 607" stroke="#c8c8c8" stroke-dasharray="1 4" />
                <path d="M315 200.500H1028" stroke="#78f078" stroke-dasharray="20 7" />
                <path d="M315 278.500H1028" stroke="#2828d8" stroke-dasharray="20 7" />
                <path d="M315 341.500H1028" stroke="#f08040" stroke-dasharray="1 2" />
                <g class="fib"><text x="654" y="197" fill="#6ee66e">76,40 %</text><text x="654" y="275" fill="#2828d8">61,80 %</text><text x="654" y="338" fill="#f08040">50,00 %</text></g>
                <path d="M1530 380L1534 382L1560 387L1593 393L1630 398L1670 402V437L1630 432L1593 427L1560 420L1544 416L1530 412z" fill="#bfffff" />
                <g class="ttl"><text x="38" y="58">Q</text><text x="38" y="87">GBP/USD</text></g>
                <text class="src" x="30" y="632">IT-Finance.com - Tiempo Real</text>
              </g>
              <polygon v-for="(a, i) in tunnelFill" :key="'t' + i" :points="a.pts" :fill="a.color" />
              <polyline :points="line(slow, -3, yMain)" fill="none" stroke="#960000" stroke-width="2" stroke-dasharray="5 5" />
              <polyline v-for="(r, i) in fastRuns" :key="'f' + i" :points="r.pts" fill="none" :stroke="r.color" stroke-width="4" stroke-linejoin="round" />
              <polyline v-for="(r, i) in longMa" :key="'l' + i" :points="r.pts" fill="none" :stroke="r.color" stroke-width="4" stroke-dasharray="7 7" />
              <g shape-rendering="crispEdges">
                <template v-for="(c, i) in candles" :key="'c' + i">
                  <rect :x="c.x" :y="c.y1" width="1" :height="c.y2 - c.y1" fill="#000" />
                  <rect v-if="c.dark" :x="c.x - 3" :y="c.top" width="7" :height="c.h" :fill="c.fill" />
                  <template v-else>
                    <rect :x="c.x - 3" :y="c.top" width="7" :height="c.h" fill="#000" />
                    <rect :x="c.x - 2" :y="c.top + 1" width="5" :height="Math.max(1, c.h - 2)" :fill="c.fill" />
                  </template>
                </template>
              </g>
              <g transform="translate(-28 -23)">
                <g fill="none" stroke="#6496fa">
                  <path d="M86 80V187L95 150L157 451L165 391L227 607L491 239L799 481L1027 199" />
                  <path d="M1018 200V268L1036 237L1062 488L1247 350L1546 607" />
                </g>
                <path d="M325 287L427 277M711 356L887 325M895 301L923 274L1009 240" fill="none" stroke="#b01414" />
                <path d="M772 441L799 465M1345 531L1441 534L1546 576" fill="none" stroke="#149614" />
                <ellipse v-for="(d, i) in dots" :key="i" :cx="d[0]" :cy="d[1]" rx="3" ry="3" fill="#c86e6e" fill-opacity=".85" />
                <g class="wave"><template v-for="(w, i) in waves" :key="i">
                  <rect :x="w[1] - (w[0] > '9' ? 7 : 6) + 0.5" :y="w[2] - 7.5" :width="w[0] > '9' ? 13 : 12" height="15" /><text :x="w[1] + 0.5" :y="w[2] + 4">{{ w[0] }}</text>
                </template></g>
                <g class="sub"><template v-for="(w, i) in subWaves" :key="i">
                  <rect :x="w[1] - 10.5" :y="w[2] - 8.5" width="21" height="18" rx="3" /><text :x="w[1]" :y="w[2] + 4">{{ w[0] }}</text>
                </template></g>
                <rect x="27.500" y="369.500" width="39" height="14" fill="#fff" stroke="#087a08" />
                <text class="lvl" x="30" y="381">1,62600</text>
              </g>
              <rect x="0" y="359" width="100%" height="4" fill="#008200" />
            </svg>
            <div class="legend">
              <span class="lg icons">
                <svg width="12" height="12"><path d="M1 1h7l3 3v8H1z" fill="#fff" stroke="#8aa0b4" /><path d="M5 3h2v4h2L6 10 3 7h2z" fill="#e61e1e" /></svg>
                <svg width="12" height="12"><path d="M1 1h7l3 3v8H1z" fill="#fff" stroke="#8aa0b4" /><path d="M5 10h2V6h2L6 3 3 6h2z" fill="#14b414" /></svg>
                <svg width="12" height="12"><circle cx="6" cy="6" r="5.500" fill="#44658c" /><path d="M4 4l4 4M8 4L4 8" stroke="#fff" stroke-width="2" /></svg>
              </span>
              <label class="lg near"><input type="checkbox" />Precio</label>
              <span class="lg list"><svg width="10" height="10"><path d="M0 1.500h2M0 5h2M0 8.500h2M3 1.500h7M3 5h7M3 8.500h7" stroke="#222" stroke-width="1.500" /></svg></span>
              <label class="lg near"><input type="checkbox" />Cierre (W)</label>
              <span class="lg wide"><i class="sq gray"></i>Tunel Domenec v4 (t t t t t)</span>
              <span class="lg wide"><i class="sq multi"></i>Control Total Doc v.6</span>
              <span class="lg wide"><i class="sq black"></i>Multi Avisos (3 f 3 1,5 70 f f)</span>
            </div>
          </div>
          <svg class="axis" width="38" height="100%">
            <g v-for="p in prices" :key="p"><path :d="`M0 ${priceY(p)}h4`" /><text x="6" :y="priceY(p) + 3">{{ priceText(p) }}</text></g>
            <g v-for="t in priceTags" :key="t.t"><rect x="4.500" :y="yMain(t.v) - 7" width="40" height="14" /><text x="6" :y="yMain(t.v) + 4" :fill="t.c">{{ t.t }}</text></g>
          </svg>
        </section>

        <section v-for="(p, n) in paneNames" :key="p.id" class="pane" :class="p.id">
          <div class="plot">
            <svg class="cv" width="100%" height="100%">
              <g class="grid">
                <line v-for="y in years" :key="y" :x1="X((y - 1980) * 4)" :x2="X((y - 1980) * 4)" y1="0" y2="100%" />
              </g>

              <template v-if="p.id === 'trend'">
                <rect x="0" :y="yTrend(46)" :width="endX" height="22" fill="#d9f5d6" />
                <rect x="0" :y="yTrend(310)" :width="endX" height="22" fill="#ffdcd8" />
                <path v-for="v in [178, 244]" :key="v" class="gl" :d="`M0 ${Math.round(yTrend(v)) + 0.5}H1849`" />
                <polygon v-for="(a, i) in trainFill" :key="'a' + i" :points="a.pts" :fill="a.color" />
                <polygon v-for="(a, i) in baseFill" :key="'b' + i" :points="a.pts" :fill="a.color" />
                <polygon v-for="(a, i) in lowFill" :key="'c' + i" :points="a.pts" :fill="a.color" />
                <polygon v-for="(a, i) in highFill" :key="'d' + i" :points="a.pts" :fill="a.color" />
                <rect v-for="v in [46, 112, 310, 376]" :key="v" x="0" :y="Math.round(yTrend(v))" :width="endX" height="1" fill="#000" />
                <path :d="`M0 65H${endX}`" stroke="#0000aa" stroke-width="2" stroke-dasharray="5 4" />
                <polyline :points="line(trainSig, -3, yTrend)" fill="none" stroke="#111" stroke-dasharray="3 3" />
                <polyline v-for="(r, i) in trainRuns" :key="'r' + i" :points="r.pts" fill="none" :stroke="r.color" stroke-width="1.500" />
                <polyline :points="line(baseSig, 58, yTrend)" fill="none" stroke="#222" stroke-width="3" stroke-dasharray="5 6" />
                <polyline v-for="(r, i) in baseRuns" :key="'s' + i" :points="r.pts" fill="none" :stroke="r.color" stroke-width="4" stroke-linejoin="round" />
                <polygon v-for="t in trainDown" :key="'x' + t[0]" :points="tri(X(t[0]), yTrend(t[1]), 4, false)" stroke="#b40000" fill="#b40000" />
                <polygon v-for="t in trainUp" :key="'y' + t[0]" :points="tri(X(t[0]), yTrend(t[1]), 4, true)" stroke="#0000b4" fill="#0000b4" />
              </template>

              <template v-else-if="p.id === 'willy'">
                <path v-for="v in [454, 496, 538, 580]" :key="v" class="gl" :d="`M0 ${Math.round(yWilly(v)) + 0.5}H1849`" />
                <rect v-for="b in bands" :key="b.x" :x="b.x" y="0" :width="b.w" height="100%" :fill="b.c" />
                <polygon v-for="(a, i) in willyHigh" :key="'a' + i" :points="a.pts" :fill="a.color" />
                <polygon v-for="(a, i) in willyLow" :key="'b' + i" :points="a.pts" :fill="a.color" />
                <path v-for="v in [412, 622]" :key="v" :d="`M0 ${Math.round(yWilly(v)) + 0.5}H${endX}`" stroke="#000" stroke-dasharray="5 3" />
                <path :d="`M0 24.500H${endX}`" stroke="#00007d" stroke-width="2" />
                <path :d="`M0 41.500H${endX}`" stroke="#0000a0" stroke-width="2" stroke-dasharray="5 4" />
                <path :d="`M0 59.500H${endX}`" stroke="#c80000" stroke-width="2" />
                <polyline v-for="(r, i) in willyRuns" :key="'r' + i" :points="r.pts" fill="none" :stroke="r.color" stroke-width="4" stroke-linejoin="round" />
                <polygon v-for="k in willyUp" :key="'u' + k" :points="tri(X(k), 42, 5, true)" stroke="#0000b4" fill="#0000b4" />
                <polygon v-for="k in willyDown" :key="'d' + k" :points="tri(X(k), 41, 5, false)" stroke="#b40000" fill="#b40000" />
              </template>

              <template v-else-if="p.id === 'awe'">
                <path v-for="v in [658, 712, 820, 874]" :key="v" class="gl" :d="`M0 ${Math.round(yAwe(v)) + 0.5}H1849`" />
                <g shape-rendering="crispEdges">
                  <template v-for="(b, i) in aoBars" :key="'b' + i"><rect :x="b.x" :y="b.y" width="6" :height="b.h" :fill="b.fill" /><rect :x="b.x + 5" :y="b.y" width="1" :height="b.h" :fill="b.edge" /></template>
                </g>
                <path :d="`M0 44H${endX}`" stroke="#1414e0" stroke-width="2" />
                <rect :x="endX" y="40" width="4" height="6" fill="#ff00ff" />
                <polyline v-for="(r, i) in aoRuns" :key="'r' + i" :points="r.pts" fill="none" :stroke="r.color" stroke-width="4" stroke-linejoin="round" />
                <polyline v-for="(r, i) in aoSlowRuns" :key="'s' + i" :points="r.pts" fill="none" :stroke="r.color" stroke-width="4" stroke-linejoin="round" />
                <polygon v-for="t in aoUp" :key="'u' + t[0]" :points="tri(X(t[0]), yAwe(t[1]), 4, true)" stroke="#14f0f0" fill="#14f0f0" />
                <polygon v-for="t in aoDown" :key="'d' + t[0]" :points="tri(X(t[0]), yAwe(t[1]), 4, false)" stroke="#fff000" fill="#fff000" />
              </template>

              <template v-else>
                <rect x="1" y="0" :width="endX + 2" height="100%" fill="#fffc85" />
                <rect v-for="f in force" :key="f.x" :x="f.x" y="0" :width="f.w" height="100%" fill="#40ff40" />
                <rect x="0" y="29" :width="endX" height="1" fill="#000" />
              </template>
            </svg>
            <div class="legend">
              <span class="lg one"><svg width="12" height="12"><circle cx="6" cy="6" r="5.500" fill="#44658c" /><path d="M4 4l4 4M8 4L4 8" stroke="#fff" stroke-width="2" /></svg></span>
              <span class="lg title"><svg width="8" height="9"><rect width="4" height="9" :fill="p.sw[0]" /><rect x="4" width="4" height="9" :fill="p.sw[1]" /></svg>{{ p.title }}</span>
            </div>
          </div>
          <svg class="axis" width="38" height="100%">
            <path v-for="v in ticks[n]" :key="v" :d="`M0 ${Math.round(axes[n].y(v)) + 0.5}h3`" />
            <g v-for="(t, i) in axes[n].tags" :key="i">
              <rect v-if="t.box" x="4.500" :y="Math.round(axes[n].y(t.v)) - 6.5" :width="tagWidth(t.t)" height="13" />
              <text x="6" :y="Math.round(axes[n].y(t.v)) + 4" :fill="t.c ?? '#111'">{{ t.t }}</text>
            </g>
          </svg>
        </section>

        <div class="time">
          <svg width="100%" height="14">
            <g v-for="y in years" :key="y"><path :d="`M${X((y - 1980) * 4)} 0v3`" stroke="#333" /><text :x="X((y - 1980) * 4)" y="12" text-anchor="middle">{{ y }}</text></g>
          </svg>
          <div class="corner"></div>
        </div>
      </main>
    </div>

    <footer class="bottom">
      <button class="draw" aria-label="Dibujar"><svg width="22" height="20"><path d="M3 5l4 12 4-11 3 8" stroke="#7a3f28" fill="none" stroke-width="1.500" /><path d="M3.500 3v14" stroke="#b43030" /><path d="M9 17l1-4 8-9 3 2-8 9z" fill="#ffd228" stroke="#7a5a00" /></svg></button>
      <button v-for="b in leftIcons" :key="b.name" class="ic" :aria-label="b.name"><svg width="20" height="20" v-html="b.svg"></svg></button>
      <button class="lessbtn" aria-label="Ocultar">«</button>
      <div class="scroll">
        <button aria-label="Atrás">‹</button>
        <div class="track"><div class="thumb"></div></div>
        <button aria-label="Adelante">›</button>
      </div>
      <button v-for="b in rightIcons" :key="b.name" class="ic r" :aria-label="b.name"><svg width="22" height="20" v-html="b.svg"></svg></button>
    </footer>
  </div>
</template>

<style>
body { margin: 0; overflow: hidden; }
</style>

<style scoped>
.app { display: flex; flex-direction: column; height: 100vh; background: #9bb9c7; font: 700 9px/12px "Liberation Sans", Arial, sans-serif; color: #111; overflow: hidden; }
button { font: inherit; color: inherit; background: none; border: 0; padding: 0; margin: 0; display: flex; align-items: center; justify-content: center; }
svg { display: block; flex: none; }
.topbar { display: flex; align-items: stretch; height: 23px; box-sizing: border-box; border-top: 1px solid #47606e; border-bottom: 2px solid #47606e; background: linear-gradient(#b9d6e4, #98b9c7); flex: none; }
.cell { border-right: 1px solid #6f8a96; box-sizing: border-box; }
.logo { width: 23px; }
.link { width: 16px; }
.pick { display: flex; align-items: center; justify-content: space-between; padding: 0 5px 0 4px; }
.pick select { appearance: none; font: inherit; color: inherit; border: 0; background: none; padding: 0; margin: 0; }
.w-sym { width: 61px; }
.w-per { width: 69px; padding-left: 5px; }
.w-unit { width: 88px; padding-left: 9px; }
.chev { fill: none; stroke: #333; stroke-width: 1.5px; }
.group { display: flex; align-items: center; gap: 3px; padding: 0 3px; }
.group.units { gap: 4px; }
.tf { height: 16px; padding: 0 2px; border: 1px solid #6f8a96; border-radius: 3px; }
.tf.on { background: #7d98a5; border-color: #5e7885; }
.ind { gap: 4px; width: 85px; }
.drop { width: 14px; }
.status { display: flex; align-items: center; flex: 1; padding-left: 8px; gap: 4px; font-weight: 400; }
.info { width: 8px; height: 9px; border: 1px solid #999; background: #e4ecef; color: #888; font: 700 9px/9px "Liberation Serif", serif; text-align: center; }
.dot { width: 8px; height: 8px; border-radius: 50%; background: #888; margin: 0 1px 0 4px; }
.chg { background: #f55555; border: 1px solid #c83c3c; border-radius: 3px; color: #fff; padding: 0 2px; }
.date { font-weight: 700; }
.pair { background: #50b4e6; border: 1px solid #3c96d2; border-radius: 4px; padding: 0 2px; }
.sync { width: 21px; border-left: 1px solid #6f8a96; }
.win { display: flex; align-items: center; width: 44px; justify-content: space-around; }
.win svg { fill: none; stroke: #6f8a96; }
.body { display: flex; flex: 1; min-height: 0; }
.side { width: 28px; flex: none; box-sizing: border-box; border-left: 1px solid #47606e; border-right: 1px solid #6f8a96; display: flex; flex-direction: column; background: #9bb9c7; }
.fold { height: 10px; width: 100%; border-bottom: 1px solid #6f8a96; flex: none; }
.tools { flex: 1; min-height: 0; overflow: hidden; padding-top: 2px; display: flex; flex-direction: column; align-items: center; }
.tools button { width: 22px; height: 22px; flex: none; box-sizing: border-box; }
.tools .active { background: #8ba5b2; border: 1px solid #6f8a96; border-radius: 3px; }
.more { height: 11px; width: 100%; border-top: 1px solid #6f8a96; border-bottom: 1px solid #6f8a96; background: linear-gradient(#b9d6e4, #98b9c7); flex: none; }
.gear { height: 27px; flex: none; }
.dotsbtn { height: 26px; flex: none; }
.charts { flex: 1; min-width: 0; display: flex; flex-direction: column; background: #fff; }
.pane { display: flex; border-top: 1px solid #6f8a96; box-sizing: border-box; flex: none; }
.pane.main { flex: 1; min-height: 0; border-top: 0; }
.trend { height: 126px; }
.willy { height: 81px; }
.awe { height: 97px; }
.force { height: 57px; }
.plot { position: relative; flex: 1; min-width: 0; height: 100%; overflow: hidden; }
.cv { position: absolute; left: 0; top: 0; }
.grid line, .gl { stroke: #d9d9d9; stroke-dasharray: 1 3; fill: none; }
.axis { border-left: 1px solid #6f8a96; box-sizing: border-box; overflow: hidden; font-size: 10px; }
.axis path { stroke: #6f8a96; }
.axis rect { fill: #fff; stroke: #6f8a96; }
.fib { font-size: 9px; font-weight: 700; }
.ttl { font-size: 24px; font-weight: 700; fill: #000; }
.src { font-size: 10px; font-weight: 400; }
.lvl { font-size: 9px; fill: #087a08; }
.wave rect { fill: #fff; stroke: #6496fa; }
.wave text { font-size: 11px; fill: #6496fa; text-anchor: middle; }
.sub rect { fill: #fff; fill-opacity: .5; stroke: #6496fa; }
.sub text { font-size: 9px; font-weight: 400; text-anchor: middle; }
.legend { position: absolute; left: 0; top: 0; display: flex; height: 15px; background: #cddae1; border-bottom: 1px solid #6f8a96; box-sizing: border-box; white-space: pre; }
.pane:not(.main) .legend { height: 17px; }
.lg { display: flex; align-items: center; gap: 5px; padding: 0 2px 0 4px; border-right: 1px solid #6f8a96; }
.lg.icons { gap: 2px; padding: 0 1px; }
.lg.near { padding: 0 2px 0 3px; gap: 4px; }
.lg.list { padding: 0 3px; }
.lg.one { padding: 0 2px 0 1px; }
.lg.title { padding: 0 6px 0 4px; gap: 4px; }
.lg.wide { padding: 0 7px 0 4px; gap: 5px; }
.lg input { appearance: none; width: 8px; height: 8px; margin: 0; border: 1px solid #6f8a96; background: #dce6eb; box-sizing: border-box; }
.sq { width: 8px; height: 8px; }
.gray { background: #6f8a96; }
.black { background: #000; }
.multi { background: linear-gradient(90deg, #e01414 0 2px, #ffe000 2px 4px, #f014f0 4px 6px, #111 6px 7px, #14c814 7px); }
.time { height: 15px; flex: none; display: flex; border-top: 1px solid #6f8a96; box-sizing: border-box; }
.time svg { flex: 1; min-width: 0; font-size: 9px; }
.corner { width: 38px; }
.bottom { height: 21px; flex: none; display: flex; align-items: center; background: #9bb9c7; border-top: 1px solid #6f8a96; box-sizing: border-box; border-left: 1px solid #47606e; overflow: hidden; }
.draw { width: 27px; border-right: 1px solid #6f8a96; box-sizing: border-box; }
.ic { width: 21px; }
.ic.r { width: 22px; }
.ic.r:last-child { width: 15px; justify-content: flex-start; }
.lessbtn { width: 14px; font-weight: 400; font-size: 14px; color: #333; }
.scroll { flex: 1; display: flex; height: 13px; margin-right: 3px; }
.scroll > button { width: 13px; border: 1px solid #6f8a96; background: #b4d0de; font-size: 12px; border-radius: 2px; box-sizing: border-box; }
.track { flex: 1; display: flex; border-top: 1px solid #6f8a96; border-bottom: 1px solid #6f8a96; background: linear-gradient(#c0dbe8, #9bbccb); }
.thumb { width: 120px; background: linear-gradient(#a5c1ce, #8fafbd); border-right: 1px solid #6f8a96; }
</style>
